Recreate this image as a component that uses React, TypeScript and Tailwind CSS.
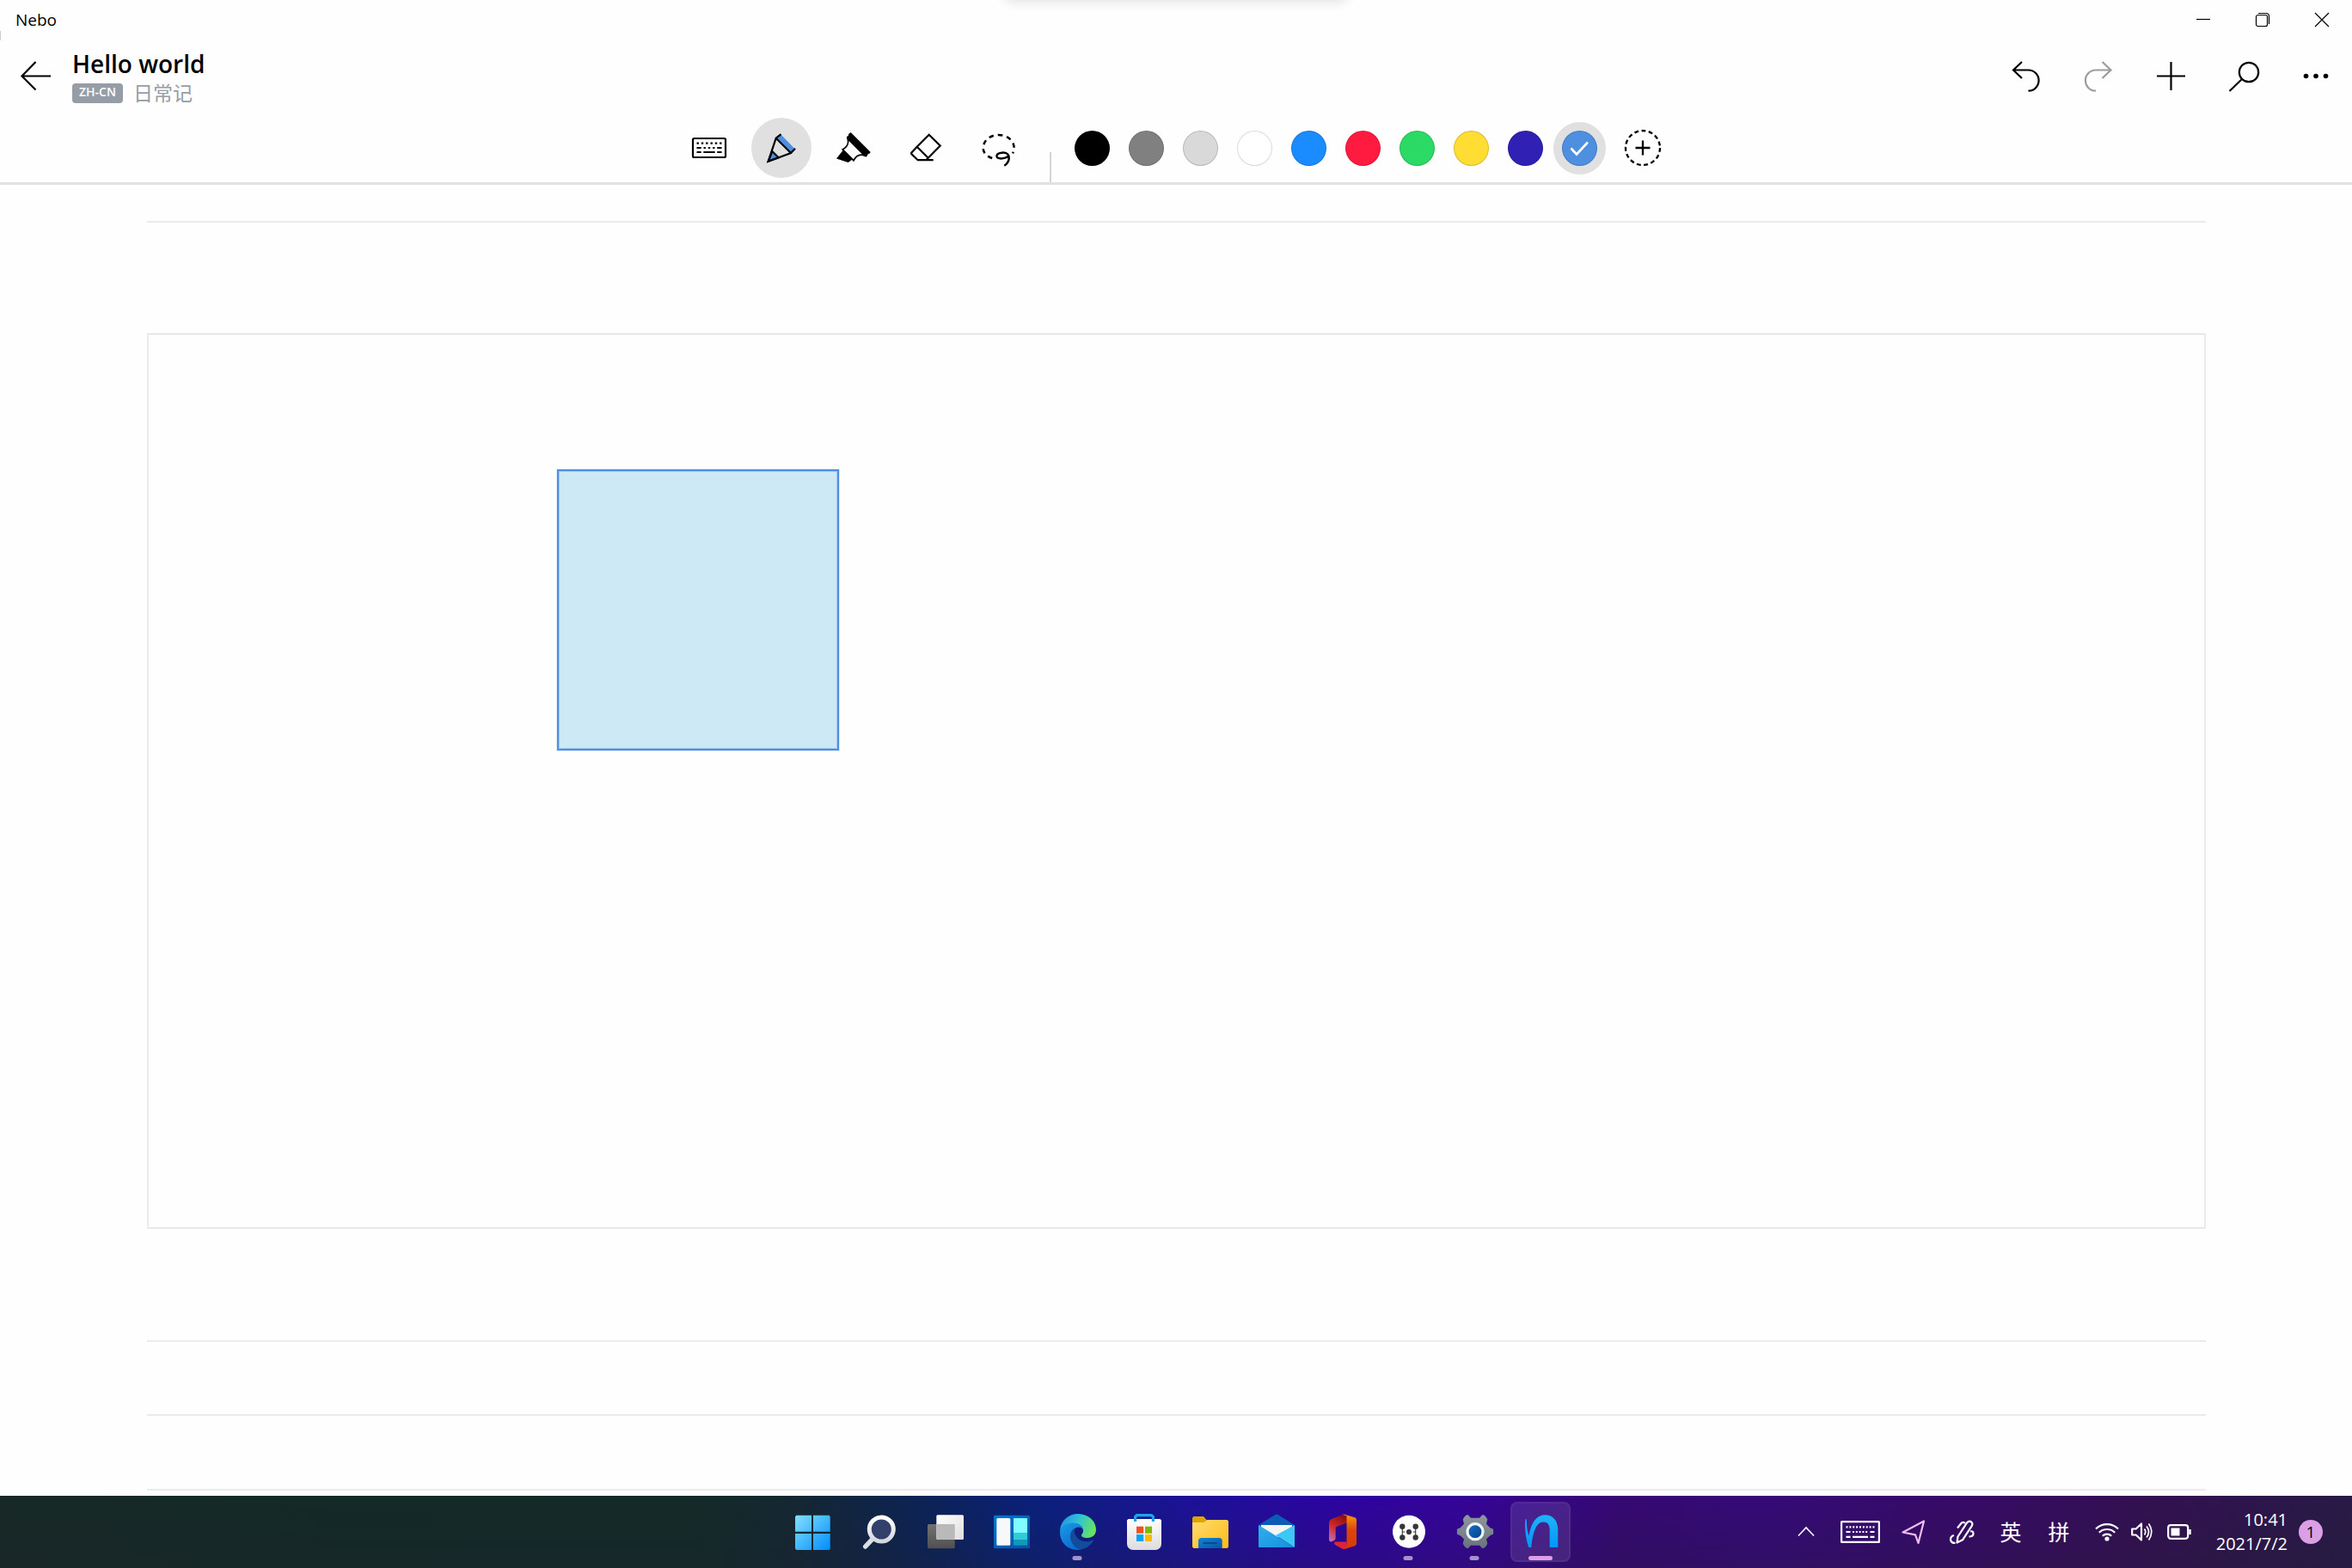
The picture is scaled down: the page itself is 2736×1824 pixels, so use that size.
import React from "react";

type IconProps = { children: React.ReactNode; className?: string; box?: string };

function Icon({ children, className = "size-9", box = "0 0 36 36" }: IconProps) {
  return (
    <svg viewBox={box} className={`${className} shrink-0 overflow-visible`} fill="none" stroke="currentColor" strokeWidth="2.2" aria-hidden="true">
      {children}
    </svg>
  );
}

function TitleBar() {
  const button = "flex h-[46px] w-[69px] items-center justify-center";
  return (
    <div className="relative flex justify-between">
      <div className="absolute -top-5 left-1/2 h-5 w-[396px] -translate-x-1/2 rounded-lg shadow-[0_0_14px_2px_rgba(0,0,0,0.12)]" />
      <span className="pt-[9px] pl-[18px] text-[19px] leading-7">Nebo</span>
      <div className="absolute top-9 left-0 h-[11px] w-px bg-[#cccccc]" />
      <div className="flex pr-px">
        <button className={button} aria-label="Minimize">
          <Icon className="size-4" box="0 0 16 16"><path d="M0 7.5h16" strokeWidth="1.2" /></Icon>
        </button>
        <button className={button} aria-label="Restore">
          <Icon className="size-4" box="0 0 16 16">
            <g strokeWidth="1.2">
              <rect x="0.5" y="2.5" width="13" height="13" rx="2" />
              <path d="M3 .5h9.5a3 3 0 0 1 3 3V13" />
            </g>
          </Icon>
        </button>
        <button className={button} aria-label="Close">
          <Icon className="size-4" box="0 0 16 16"><path d="M0 0l16 16M16 0L0 16" strokeWidth="1.2" /></Icon>
        </button>
      </div>
    </div>
  );
}

function NoteHeader() {
  const button = "flex size-[84px] items-center justify-center";
  return (
    <header className="flex items-center justify-between">
      <div className="flex items-center">
        <button className={button} aria-label="Back">
          <Icon><path d="M2 18.5h33M17.5 2L1.5 18.5l16 16" /></Icon>
        </button>
        <div>
          <h1 className="text-[28px] leading-10 font-semibold">Hello world</h1>
          <div className="flex items-center gap-3 text-[#969da7]">
            <span className="rounded-[4px] bg-[#969da7] px-2 pb-[3px] text-[14px] leading-5 font-semibold text-white">ZH-CN</span>
            <span className="text-[23px] leading-7">日常记</span>
          </div>
        </div>
      </div>
      <div className="flex">
        <button className={button} aria-label="Undo">
          <Icon><path d="M12 2L2 11.5 12 21M2 11.5h17.5a12 12 0 0 1 0 24.2" /></Icon>
        </button>
        <button className={`${button} text-[#9c9c9c]`} aria-label="Redo" disabled>
          <Icon><path d="M21.5 2l10 9.500-10 9.500M31.5 11.5H14a12 12 0 0 0 0 24.2" /></Icon>
        </button>
        <button className={button} aria-label="Add">
          <Icon><path d="M1 18.5h33M17.5 2v33" /></Icon>
        </button>
        <button className={button} aria-label="Search">
          <Icon><circle cx="24" cy="14" r="11.2" /><path d="M16.5 21.5L1.5 36" /></Icon>
        </button>
        <button className={button} aria-label="More">
          <Icon>
            <g fill="currentColor" stroke="none">
              <circle cx="6.5" cy="18.5" r="2.8" /><circle cx="18" cy="18.5" r="2.8" /><circle cx="29.5" cy="18.5" r="2.8" />
            </g>
          </Icon>
        </button>
      </div>
    </header>
  );
}

const tools = [
  {
    name: "Keyboard",
    art: (
      <>
        <rect x="5" y="13" width="38" height="22" rx="1.5" />
        <path d="M9.500 18.700h2.400M14.800 18.700h2.400M20.100 18.700h2.400M25.500 18.700h2.400M30.800 18.700h2.400M36.100 18.700h2.400M9.500 24h5.200M17.500 24h2.400M22.800 24h2.400M28.100 24h2.400M33.200 24h5.400M9.500 29h5.200M17.300 29h13.400M33.200 29h5.400" />
      </>
    ),
  },
  {
    name: "Pen",
    art: (
      <>
        <path d="M17.700 12.700L23 8l16.700 17.300L35 30z" fill="#4f8fe0" stroke="none" />
        <path d="M13.300 28l7.400 7.300-12 4.400z" fill="#4f8fe0" />
        <path d="M23.500 8.200l-5.800 4.500-9 27L35 30l5-5.200M17.700 12.700L35 30" />
      </>
    ),
  },
  {
    name: "Highlighter",
    art: (
      <>
        <path d="M20.700 6l23 23-1.500 2-1.200-.200L39 34.500l-2.500-.500L16.500 14l-.800-2.500 2.500-2.200-.200-1.300z" fill="currentColor" stroke="none" />
        <path d="M17.200 13c1.500 6 0 9.500-6 13L24 38.700c3-6 7-8 13-5.700" strokeWidth="1.8" />
        <path d="M11.500 27L4 36.400 17.700 41l4.800-3.500z" fill="currentColor" stroke="none" />
      </>
    ),
  },
  {
    name: "Eraser",
    art: <path d="M13.700 22.700L27.700 8.700l13 12.700L24.500 38M13.700 22.700L7.200 29.800v1.200l7.500 7.200h18M13.700 22.700l13 13" />,
  },
  {
    name: "Lasso",
    art: (
      <>
        <path d="M17.200 36c-6-2-10.500-6-10.500-11.500 0-9 8-15.500 18-15.500s18 6.500 18 15.500c0 2-.500 4-1.800 5.800" strokeDasharray="5.5 5" strokeWidth="2.5" />
        <path d="M31.300 44.700c4.500-3 6-7 5.200-11-1-3.500-5-4.500-8.500-4-3.500.400-5.700 2-5.500 4.200.500 3.500 11 3.500 14-1.200" strokeWidth="2.5" />
      </>
    ),
  },
];

const swatches = [
  { name: "Black", fill: "bg-black" },
  { name: "Gray", fill: "bg-[#808080]" },
  { name: "Light gray", fill: "bg-[#d9d9d9]" },
  { name: "White", fill: "bg-white" },
  { name: "Blue", fill: "bg-[#1a8cff]" },
  { name: "Red", fill: "bg-[#ff1a40]" },
  { name: "Green", fill: "bg-[#2bd965]" },
  { name: "Yellow", fill: "bg-[#ffdd33]" },
  { name: "Indigo", fill: "bg-[#3020b3]" },
  { name: "Sky blue", fill: "bg-[#4f8fe0]" },
];

function Toolbar() {
  return (
    <div className="flex justify-center border-b-[3px] border-[#e2e2e3] pt-[7px]">
      <div className="flex pb-[5px]">
        {tools.map((tool) => (
          <div key={tool.name} className="flex w-[84px] justify-center">
            <button
              aria-label={tool.name}
              aria-pressed={tool.name === "Pen"}
              className="flex size-[70px] items-center justify-center rounded-full aria-pressed:bg-[#e0e0e0]"
            >
              <Icon className="size-12" box="0 0 48 48">{tool.art}</Icon>
            </button>
          </div>
        ))}
      </div>
      <div className="mr-4 ml-[18px] h-[35px] w-0.5 self-end bg-[#d2d6db]" />
      <div className="flex items-center pb-[5px]">
        {swatches.map((swatch) => (
          <div key={swatch.name} className="flex w-[63px] justify-center">
            <button
              aria-label={swatch.name}
              aria-pressed={swatch.name === "Sky blue"}
              className="flex size-[61px] items-center justify-center rounded-full aria-pressed:bg-[#e0e0e0]"
            >
              <span className={`flex size-[41px] items-center justify-center rounded-full border border-black/15 ${swatch.fill}`}>
                {swatch.name === "Sky blue" && (
                  <Icon className="size-6 text-white" box="0 0 24 24"><path d="M1.500 12.500L8 19.500 21 5.500" strokeWidth="2.6" /></Icon>
                )}
              </span>
            </button>
          </div>
        ))}
        <button aria-label="Add color" className="flex h-[70px] w-[84px] items-center justify-center">
          <Icon className="size-12" box="0 0 48 48">
            <circle cx="24" cy="24" r="20" strokeDasharray="4.9 3.478" strokeWidth="2.3" />
            <path d="M15.500 24h17M24 15.500v17" strokeWidth="2.3" />
          </Icon>
        </button>
      </div>
    </div>
  );
}

function Page() {
  const rule = "h-0.5 bg-[#ebebeb]";
  return (
    <main className="flex flex-1 flex-col pt-[42px] pr-[170px] pb-1.5 pl-[171px]">
      <div className={rule} />
      <section aria-label="Drawing" className="relative mt-[129px] mb-[130px] min-h-[600px] flex-1 border-x-2 border-y border-x-[#ebebeb] border-y-[#d8d8d8]">
        <div className="absolute top-[157px] left-[475px] h-[327px] w-[328px] border-2 border-[#4f8fe0] bg-[#cde9f6] shadow-[0_0_0_1px_#dce9fa,inset_0_0_0_1px_#a6cbee]" />
      </section>
      <div className={rule} />
      <div className={`${rule} mt-[84px]`} />
      <div className={`${rule} mt-[85px]`} />
    </main>
  );
}

const taskbarApps = [
  {
    name: "Start",
    state: "",
    art: (
      <>
        <linearGradient id="start" gradientUnits="userSpaceOnUse" x1="4" y1="4" x2="45" y2="45"><stop stopColor="#86e0ff" /><stop offset="1" stopColor="#008dfb" /></linearGradient>
        <path d="M5.500 4.700H23v19H4V6.200zM25 4.700h18.500l1.200 1.500v17.500H25zM4 26h19v19H5.500L4 43.500zM25 26h19.700v17.500L43.500 45H25z" fill="url(#start)" />
      </>
    ),
  },
  {
    name: "Search",
    state: "",
    art: (
      <>
        <linearGradient id="lens" x1="0" y1="0" x2="0" y2="1"><stop stopColor="#ffffff" /><stop offset="1" stopColor="#d4d8da" /></linearGradient>
        <path d="M18 31L8.700 41" stroke="#dcdfe2" strokeWidth="5.5" strokeLinecap="round" />
        <circle cx="27.3" cy="21" r="14" fill="#33406c" stroke="url(#lens)" strokeWidth="5" />
      </>
    ),
  },
  {
    name: "Task View",
    state: "",
    art: (
      <>
        <linearGradient id="tv-back" x1="0" y1="0" x2="0" y2="1"><stop stopColor="#727272" /><stop offset="1" stopColor="#505050" /></linearGradient>
        <linearGradient id="tv-front" x1="0" y1="0" x2="1" y2="1"><stop stopColor="#ffffff" /><stop offset="1" stopColor="#dedede" /></linearGradient>
        <rect x="4" y="15" width="31.7" height="28.2" rx="1.5" fill="url(#tv-back)" />
        <rect x="14.3" y="4.3" width="31.7" height="28.7" rx="1.5" fill="url(#tv-front)" />
        <path d="M14.300 15h21.400v18H15.800l-1.500-1.500z" fill="#b9b9b9" />
      </>
    ),
  },
  {
    name: "Widgets",
    state: "",
    art: (
      <>
        <linearGradient id="widgets" x1="0" y1="0" x2="1" y2="1"><stop stopColor="#0078d4" /><stop offset="1" stopColor="#0a4ea3" /></linearGradient>
        <rect x="4" y="4.7" width="42" height="38.5" rx="1.5" fill="url(#widgets)" />
        <rect x="7.3" y="8" width="16" height="31.7" rx="1.5" fill="#f8f8fa" />
        <path d="M27 8h16v17H27z" fill="#80fbff" />
        <path d="M27 25h16v8H27z" fill="#2fcbd8" />
        <path d="M27 33h16v6.700H27z" fill="#1399b8" />
      </>
    ),
  },
  {
    name: "Edge",
    state: "running",
    art: (
      <>
        <linearGradient id="edge-top" x1="0" y1="0.3" x2="1" y2="0.6"><stop stopColor="#2393e0" /><stop offset="0.45" stopColor="#2fc2d8" /><stop offset="1" stopColor="#6be558" /></linearGradient>
        <linearGradient id="edge-left" x1="0" y1="0" x2="0.6" y2="1"><stop stopColor="#1a9be3" /><stop offset="1" stopColor="#0b6cd0" /></linearGradient>
        <path d="M4 24C4 11 14 3 25 3c12 0 21 8.500 21 18.500 0 6-4.500 9.500-10 9.500-4.500 0-7-1.300-7-3 0-1.300 2-2 2-5.500C31 18 26.500 14 20 14 12 14 5.500 18 4 24z" fill="url(#edge-top)" />
        <path d="M4 24c1-6.500 7-10.500 15-10.500 8 0 12 4.500 12 9 0-2-2.500-4-5.500-4-4 0-7 4-7 9 0 8 5 15 11 16.500-1.500.600-3 .900-5 .900C12.500 44.900 4 36 4 24z" fill="url(#edge-left)" />
        <path d="M21.500 19.500c-5 3-6.500 8-5 13.500C18.500 40 24 45 29.500 44c6-1 11-5 13.300-9.700.400-.900-.300-1.300-1-.900-5.800 3-12.300 2.400-16.800-1.900-4-3.900-4.800-7.500-3.500-12z" fill="#104d9c" />
      </>
    ),
  },
  {
    name: "Store",
    state: "",
    art: (
      <>
        <linearGradient id="bag" x1="0" y1="0" x2="0" y2="1"><stop stopColor="#ffffff" /><stop offset="1" stopColor="#dcdcde" /></linearGradient>
        <path d="M5 10.500L6.500 9h37l1.500 1.500V38a7 7 0 0 1-7 7H12a7 7 0 0 1-7-7z" fill="url(#bag)" />
        <path d="M14.600 12V6.500L16.500 4.600h17l1.900 1.900V12" stroke="#1da4ee" strokeWidth="3.2" />
        <path d="M16 17.700h8.200v8H16z" fill="#f25022" /><path d="M26 17.700h8v8h-8z" fill="#7fba00" />
        <path d="M16 27h8.200v8H16z" fill="#00a4ef" /><path d="M26 27h8v8h-8z" fill="#ffb900" />
      </>
    ),
  },
  {
    name: "File Explorer",
    state: "",
    art: (
      <>
        <linearGradient id="folder" x1="0" y1="0" x2="1" y2="1"><stop stopColor="#ffdc72" /><stop offset="1" stopColor="#fdbb12" /></linearGradient>
        <linearGradient id="folder-tray" x1="0" y1="0" x2="1" y2="1"><stop stopColor="#1583d8" /><stop offset="1" stopColor="#0656a4" /></linearGradient>
        <path d="M4 7.500L5.500 6H17l3.500 4-1 5H4z" fill="#e0a200" />
        <path d="M4 13h13.500l3.500-3h23.500l1.500 1.500v30L44.500 43h-39L4 41.500z" fill="url(#folder)" />
        <path d="M11 43V34.500A3.500 3.500 0 0 1 14.500 31h20.700a3.500 3.500 0 0 1 3.500 3.500V43z" fill="url(#folder-tray)" />
        <path d="M17.200 37H32" stroke="#0a4a8e" strokeWidth="1.8" strokeLinecap="round" />
      </>
    ),
  },
  {
    name: "Mail",
    state: "",
    art: (
      <>
        <linearGradient id="mail" x1="0" y1="0" x2="1" y2="1"><stop stopColor="#2fb0ee" /><stop offset="1" stopColor="#158fdc" /></linearGradient>
        <path d="M4 16L23 4.200q2-1.300 4 0L46 16l-2 4H6z" fill="#0a5cb4" />
        <path d="M7 16h36v4L25 31 7 20z" fill="#f4f4f4" />
        <path d="M46 16v26L24 28z" fill="#3cc8f4" />
        <path d="M4 16l42 26H4z" fill="url(#mail)" />
      </>
    ),
  },
  {
    name: "Office",
    state: "",
    art: (
      <>
        <linearGradient id="office-left" x1="0.6" y1="0" x2="0.2" y2="1"><stop stopColor="#8e0f12" /><stop offset="0.5" stopColor="#cf2a2a" /><stop offset="1" stopColor="#c06bb4" /></linearGradient>
        <linearGradient id="office-right" x1="0" y1="0" x2="0" y2="1"><stop stopColor="#f99c06" /><stop offset="0.45" stopColor="#dc4409" /><stop offset="1" stopColor="#d83b01" /></linearGradient>
        <path d="M25 3.700l5 2v7.800l-11.500 4q-1.800.700-1.800 2.800V31q0 2-1.700 3l-3 1.300q-3 .700-3-2.300V14q0-3.500 3-5z" fill="url(#office-left)" />
        <path d="M25 3.700q1.500-.300 3 .200L39 7.300q2 .700 2 3v27q0 2.300-2 3L28 43.700l-3 .300 4.500-5.500v-33z" fill="url(#office-right)" />
        <path d="M16.200 35.500H29.500v6.800q-2.500 2.500-5.500 1.200l-8-4.500q-2-2.500.200-3.500z" fill="#dd2438" />
      </>
    ),
  },
  {
    name: "Node links",
    state: "running",
    art: (
      <>
        <circle cx="25" cy="23.7" r="19" fill="#fdfdfd" />
        <g fill="#36363a">
          <circle cx="17.3" cy="17.7" r="3.2" /><circle cx="17.3" cy="30.5" r="3.2" /><circle cx="32.7" cy="17.7" r="3.2" /><circle cx="32.7" cy="30.5" r="3.2" /><circle cx="25" cy="24" r="3.1" />
        </g>
        <path d="M17.300 18v12M32.700 18v12M17.300 24h3M29.700 24h3" stroke="#36363a" strokeWidth="1.1" />
      </>
    ),
  },
  {
    name: "Settings",
    state: "running",
    art: (
      <>
        <linearGradient id="gear" x1="0" y1="0" x2="0" y2="1"><stop stopColor="#8c97a0" /><stop offset="1" stopColor="#69737c" /></linearGradient>
        <linearGradient id="gear-hub" x1="0" y1="0" x2="1" y2="1"><stop stopColor="#1470cc" /><stop offset="1" stopColor="#063f82" /></linearGradient>
        <path d="M12.500 6.500q1.500-2.500 4-2.500l3.500 3.800h10L33.500 4q2.500 0 4 2.500l1.800 3L38 14.800l4.300 4.500 3.700 1.400q.300 3 0 6l-3.700 1.500-4.300 4.300 1.300 5.300-1.800 3q-1.500 2.400-4 2.500L30 39.700H20l-3.500 3.600q-2.500-.100-4-2.500l-1.800-3L12 32.500l-4.300-4.300L4 26.700q-.300-3 0-6l3.700-1.400 4.300-4.500-1.300-5.300z" fill="url(#gear)" />
        <circle cx="25" cy="23.7" r="9" fill="url(#gear-hub)" stroke="#f3f3f3" strokeWidth="3.2" />
      </>
    ),
  },
  {
    name: "Nebo",
    state: "active",
    art: (
      <>
        <linearGradient id="nebo" x1="0" y1="0" x2="0" y2="1"><stop stopColor="#1cb4f7" /><stop offset="1" stopColor="#0695fa" /></linearGradient>
        <path d="M6.500 9l1.200.5c.300 9 1 14 2.800 19C13 13 20 4.300 29 4.300c9 0 15.300 6 15.300 17V42h-9.600V22c0-6.500-2.700-9.500-7.200-9.500C20 12.500 15 22 13.300 42h-3C6.500 31 5.500 20 6.500 9z" fill="url(#nebo)" />
      </>
    ),
  },
];

function TaskbarApp({ app }: { app: (typeof taskbarApps)[number] }) {
  const active = app.state === "active";
  return (
    <div className="flex w-[77px] justify-center">
      <button
        aria-label={app.name}
        className={`relative flex size-[70px] items-center justify-center rounded-lg border-2 ${active ? "border-white/5 bg-white/10" : "border-transparent"}`}
      >
        <Icon className="size-12" box="0 0 48 48"><g stroke="none">{app.art}</g></Icon>
        {app.state !== "" && (
          <span className={`absolute bottom-0 left-1/2 h-[5px] -translate-x-1/2 rounded-full ${active ? "w-7 bg-[#df9fe6]" : "w-[11px] bg-[#a393cb]"}`} />
        )}
      </button>
    </div>
  );
}

function Tray() {
  return (
    <div className="flex items-center justify-end pr-[34px] text-white">
      <button className="flex w-14 justify-center" aria-label="Show hidden icons">
        <Icon className="size-[18px]" box="0 0 18 18"><path d="M0 13.500L9 4l9 9.500" strokeWidth="1.6" /></Icon>
      </button>
      <button className="flex w-[70px] justify-center" aria-label="Touch keyboard">
        <Icon className="h-[26px] w-[46px]" box="0 0 46 26">
          <rect x="1.1" y="1.1" width="43.8" height="23.8" rx="0.5" />
          <path d="M6.500 7.300h33" strokeDasharray="2 1.87" />
          <path d="M6.500 13h5M34.500 13h5M6.500 18.800h5M14 18.800h18M34.500 18.800h5" />
          <path d="M14 13h18" strokeDasharray="2 1.8" />
        </Icon>
      </button>
      <button className="flex w-[54px] justify-center text-[#f0bdf2]" aria-label="Location">
        <Icon className="size-7" box="0 0 28 28"><path d="M26 1.500L1.500 14.500 16 17.300 19.500 27z" strokeLinejoin="round" /></Icon>
      </button>
      <button className="flex w-[58px] justify-center" aria-label="Pen menu">
        <Icon className="size-7" box="0 0 28 28">
          <path d="M8.500 26.500l1-7L20 3.500q2.500-3 5-1.200t.500 5L15 23.300z" strokeLinejoin="round" />
          <path d="M18 4q-2.500-2.500-5 .5L9 9.500M24 13.500q3.500-1 3.500 2.500 0 3.500-5 3.500M5 18q-4 1-4 5 .5 4 5.500 4" />
        </Icon>
      </button>
      <button className="w-14 text-center text-[25px] leading-9">英</button>
      <button className="w-14 text-center text-[25px] leading-9">拼</button>
      <button className="flex items-center gap-3.5 px-3.5" aria-label="Network, volume and battery">
        <Icon className="size-7" box="0 0 28 28">
          <path d="M1 10.500a18.500 18.500 0 0 1 26 0M4.800 14.800a13 13 0 0 1 18.400 0M8.800 18.800a7.500 7.500 0 0 1 10.400 0" />
          <circle cx="14" cy="22" r="2.6" fill="currentColor" stroke="none" />
        </Icon>
        <Icon className="size-7" box="0 0 28 28">
          <path d="M1.200 10.500h4.500L12 4.500v19l-6.300-6H1.200z" strokeLinejoin="round" />
          <path d="M15.500 10.500q2.500 3.500 0 7M18 7.500q5 6.500 0 13M20.500 4.500q6.500 9.500 0 19" strokeWidth="1.7" />
        </Icon>
        <Icon className="size-7" box="0 0 28 28">
          <rect x="1.2" y="6.2" width="23" height="15.6" rx="3" />
          <path d="M4.500 9.500h10v9h-10z" fill="currentColor" stroke="none" />
          <path d="M26.500 11v6" strokeWidth="2.5" />
        </Icon>
      </button>
      <button className="w-[98px] text-right text-[20px] leading-7">
        <time className="block">10:41</time>
        <time className="block">2021/7/2</time>
      </button>
      <button aria-label="1 notification" className="ml-[13px] size-7 rounded-full bg-[#da9fe4] text-center text-[19px] leading-7 text-black">1</button>
    </div>
  );
}

function Taskbar() {
  return (
    <footer className="bg-[linear-gradient(90deg,#172926_0%,#132a26_15%,#132a28_30%,#142733_34%,#0c2354_39%,#0a207c_44%,#1d109a_51%,#2d03a2_57%,#35049a_62%,#360872_69%,#350a78_75%,#370a66_84%,#331052_91%,#281a46_100%)]">
      <div className="grid grid-cols-[1fr_auto_1fr] bg-linear-to-b from-transparent to-[#20203040]">
        <div />
        <nav aria-label="Taskbar" className="flex py-[7px]">
          {taskbarApps.map((app) => <TaskbarApp key={app.name} app={app} />)}
        </nav>
        <Tray />
      </div>
    </footer>
  );
}

export default function App() {
  return (
    <div className="flex min-h-screen flex-col overflow-hidden bg-[#fefefe] font-['Open_Sans','Noto_Sans_CJK_SC',sans-serif] text-black">
      <TitleBar />
      <NoteHeader />
      <Toolbar />
      <Page />
      <Taskbar />
    </div>
  );
}
